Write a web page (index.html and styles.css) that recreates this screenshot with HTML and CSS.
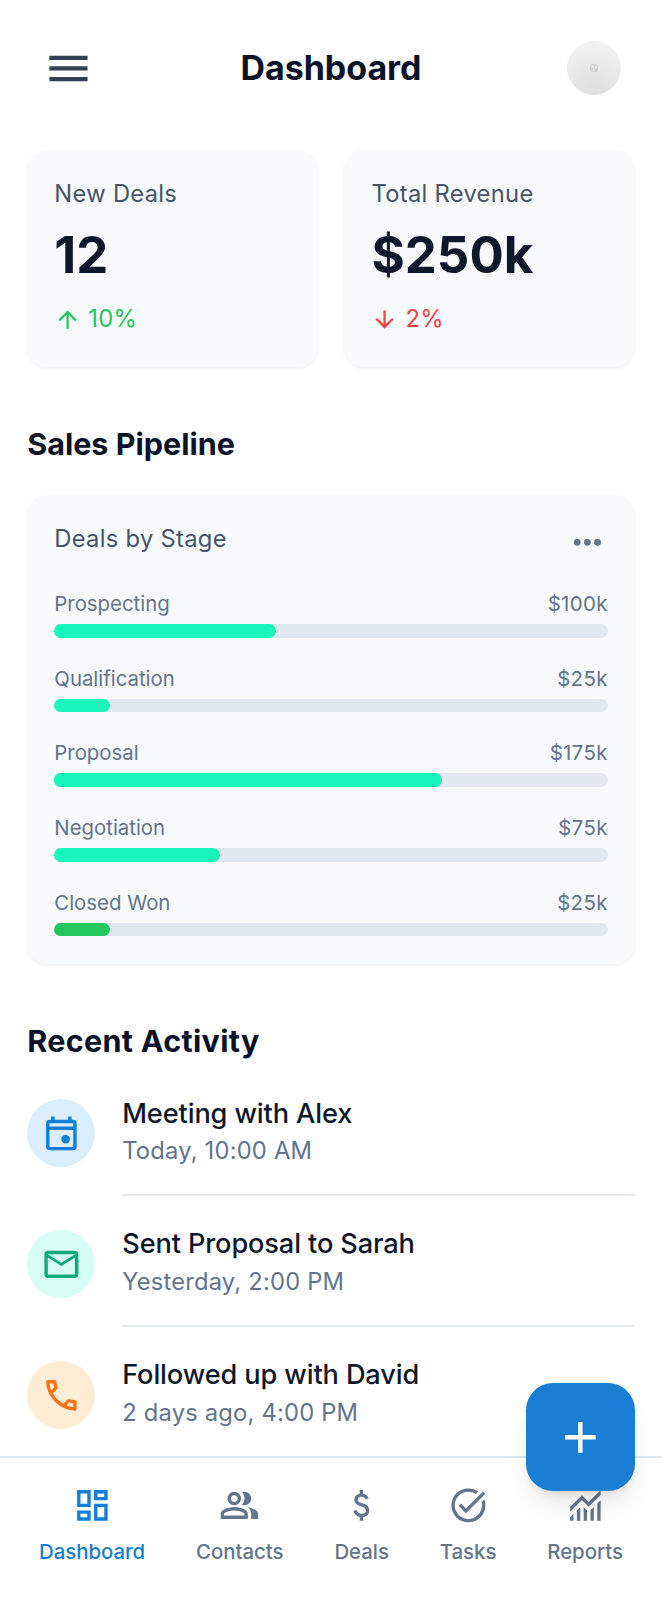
FILE: index.html
```html
<!DOCTYPE html>
<html lang="en">
<head>
<meta charset="utf-8">
<meta name="viewport" content="width=device-width, initial-scale=1">
<title>Dashboard</title>
<link rel="stylesheet" href="styles.css">
</head>
<body>
<div class="app">
  <header class="topbar">
    <button class="topbar-slot menu-button" aria-label="Menu">
      <svg class="icon icon-menu" viewBox="0 -960 960 960"><path d="M120-240v-80h720v80H120Zm0-200v-80h720v80H120Zm0-200v-80h720v80H120Z"/></svg>
    </button>
    <h1 class="topbar-title">Dashboard</h1>
    <div class="topbar-slot">
      <div class="avatar"><svg class="avatar-mark" viewBox="0 0 8 8"><rect x=".75" y=".75" width="6.5" height="6.5" rx="1"/><path d="M1 4.8h3.4M4.6 1v3M5 5h1.4v1.4H5z"/></svg></div>
    </div>
  </header>

  <main class="content">
    <section class="stats">
      <article class="card stat">
        <p class="label">New Deals</p>
        <p class="stat-value">12</p>
        <p class="trend trend-up">
          <svg class="icon icon-small" viewBox="0 -960 960 960"><path d="M440-160v-487L216-423l-56-57 320-320 320 320-56 57-224-224v487h-80Z"/></svg>
          <span>10%</span>
        </p>
      </article>
      <article class="card stat">
        <p class="label">Total Revenue</p>
        <p class="stat-value">$250k</p>
        <p class="trend trend-down">
          <svg class="icon icon-small" viewBox="0 -960 960 960"><path d="M440-800v487L216-537l-56 57 320 320 320-320-56-57-224 224v-487h-80Z"/></svg>
          <span>2%</span>
        </p>
      </article>
    </section>

    <section class="section">
      <h2 class="section-title">Sales Pipeline</h2>
      <div class="card pipeline">
        <div class="pipeline-head">
          <p class="label">Deals by Stage</p>
          <svg class="icon icon-more" viewBox="0 -960 960 960"><circle cx="240" cy="-480" r="80"/><circle cx="480" cy="-480" r="80"/><circle cx="720" cy="-480" r="80"/></svg>
        </div>
        <div class="stage">
          <div class="stage-row"><span>Prospecting</span><span class="amount">$100k</span></div>
          <div class="track"><div class="fill" style="width:40%"></div></div>
        </div>
        <div class="stage">
          <div class="stage-row"><span>Qualification</span><span class="amount">$25k</span></div>
          <div class="track"><div class="fill" style="width:10%"></div></div>
        </div>
        <div class="stage">
          <div class="stage-row"><span>Proposal</span><span class="amount">$175k</span></div>
          <div class="track"><div class="fill" style="width:70%"></div></div>
        </div>
        <div class="stage">
          <div class="stage-row"><span>Negotiation</span><span class="amount">$75k</span></div>
          <div class="track"><div class="fill" style="width:30%"></div></div>
        </div>
        <div class="stage">
          <div class="stage-row"><span>Closed Won</span><span class="amount">$25k</span></div>
          <div class="track"><div class="fill fill-won" style="width:10%"></div></div>
        </div>
      </div>
    </section>

    <section class="section">
      <h2 class="section-title section-title-wide">Recent Activity</h2>
      <ul class="activity">
        <li class="activity-item">
          <div class="badge badge-blue"><svg class="icon" viewBox="0 -960 960 960"><path d="M580-240q-42 0-71-29t-29-71q0-42 29-71t71-29q42 0 71 29t29 71q0 42-29 71t-71 29ZM200-80q-33 0-56.5-23.5T120-160v-560q0-33 23.5-56.5T200-800h40v-80h80v80h320v-80h80v80h40q33 0 56.5 23.5T840-720v560q0 33-23.5 56.5T760-80H200Zm0-80h560v-400H200v400Zm0-480h560v-80H200v80Z"/></svg></div>
          <div class="activity-body">
            <p class="activity-title">Meeting with Alex</p>
            <p class="activity-time">Today, 10:00 AM</p>
          </div>
        </li>
        <li class="activity-item">
          <div class="badge badge-green"><svg class="icon" viewBox="0 -960 960 960"><path d="M160-160q-33 0-56.5-23.5T80-240v-480q0-33 23.5-56.5T160-800h640q33 0 56.5 23.5T880-720v480q0 33-23.5 56.5T800-160H160Zm320-280L160-640v400h640v-400L480-440Zm0-80 320-200H160l320 200Z"/></svg></div>
          <div class="activity-body">
            <p class="activity-title">Sent Proposal to Sarah</p>
            <p class="activity-time">Yesterday, 2:00 PM</p>
          </div>
        </li>
        <li class="activity-item">
          <div class="badge badge-orange"><svg class="icon" viewBox="0 -960 960 960"><path d="M798-120q-125 0-247-54.5T329-329Q229-429 174.5-551T120-798q0-18 12-30t30-12h162q14 0 25 9.5t13 22.5l26 140q2 16-1 27t-11 19l-97 98q20 37 47.5 71.5T387-386q31 31 65 57.5t72 48.5l94-94q9-9 23.5-13.5T670-390l138 28q14 4 23 14.5t9 23.5v162q0 18-12 30t-30 12ZM241-600l66-66-17-94h-89q5 41 14 81t26 79Zm358 358q39 17 79.5 27t81.5 13v-88l-94-19-67 67Z"/></svg></div>
          <div class="activity-body">
            <p class="activity-title">Followed up with David</p>
            <p class="activity-time">2 days ago, 4:00 PM</p>
          </div>
        </li>
      </ul>
    </section>
  </main>

  <nav class="tabbar">
    <a class="tab tab-active">
      <svg class="icon" viewBox="0 -960 960 960"><path d="M520-600v-240h320v240H520ZM120-440v-400h320v400H120Zm400 320v-400h320v400H520Zm-400 0v-240h320v240H120Zm80-400h160v-240H200v240Zm400 320h160v-240H600v240Zm0-480h160v-80H600v80ZM200-200h160v-80H200v80Z"/></svg>
      <span>Dashboard</span>
    </a>
    <a class="tab">
      <svg class="icon" viewBox="0 -960 960 960"><path d="M40-160v-112q0-34 17.5-62.5T104-378q62-31 126-46.5T360-440q66 0 130 15.5T616-378q29 15 46.5 43.5T680-272v112H40Zm720 0v-120q0-44-24.5-84.5T666-434q51 6 96 20.5t84 35.5q36 20 55 44.5t19 53.5v120H760ZM360-480q-66 0-113-47t-47-113q0-66 47-113t113-47q66 0 113 47t47 113q0 66-47 113t-113 47Zm400-160q0 66-47 113t-113 47q-11 0-28-2.5t-28-5.5q27-32 41.5-71t14.5-81q0-42-14.5-81T544-792q14-5 28-6.5t28-1.5q66 0 113 47t47 113ZM120-240h480v-32q0-11-5.5-20T580-306q-54-27-109-40.5T360-360q-56 0-111 13.5T140-306q-9 5-14.5 14t-5.5 20v32Zm240-320q33 0 56.5-23.5T440-640q0-33-23.5-56.5T360-720q-33 0-56.5 23.5T280-640q0 33 23.5 56.5T360-560Z"/></svg>
      <span>Contacts</span>
    </a>
    <a class="tab">
      <svg class="icon" viewBox="0 -960 960 960"><path d="M441-120v-86q-53-12-91.5-46T293-348l74-30q15 48 44.5 73t77.5 25q41 0 69.5-18.5T587-356q0-35-22-55.5T463-458q-86-27-118-64.5T313-614q0-65 42-101t86-41v-84h80v84q50 8 82.5 36.5T651-650l-74 32q-12-32-34-48t-60-16q-44 0-67 19.5T393-614q0 33 30 52t104 40q69 20 104.5 63.5T667-358q0 71-42 108t-104 46v84h-80Z"/></svg>
      <span>Deals</span>
    </a>
    <a class="tab">
      <svg class="icon" viewBox="0 -960 960 960"><path d="M480-80q-83 0-156-31.5T197-197q-54-54-85.5-127T80-480q0-83 31.5-156T197-763q54-54 127-85.5T480-880q65 0 123 19t107 53l-58 59q-38-24-81-37.5T480-800q-133 0-226.5 93.5T160-480q0 133 93.5 226.5T480-160q133 0 226.5-93.5T800-480q0-18-2-36t-6-35l65-65q11 32 17 66t6 70q0 83-31.5 156T763-197q-54 54-127 85.5T480-80Zm-56-216L254-466l56-56 114 114 400-401 56 56-456 457Z"/></svg>
      <span>Tasks</span>
    </a>
    <a class="tab">
      <svg class="icon" viewBox="0 -960 960 960"><path d="M120-120v-80l80-80v160h-80Zm160 0v-240l80-80v320h-80Zm160 0v-320l80 81v239h-80Zm160 0v-239l80-80v319h-80Zm160 0v-400l80-80v480h-80ZM120-327v-113l280-280 160 160 280-280v113L560-447 400-607 120-327Z"/></svg>
      <span>Reports</span>
    </a>
  </nav>

  <button class="fab" aria-label="Add">
    <svg class="icon icon-add" viewBox="0 -960 960 960"><path d="M440-440H200v-80h240v-240h80v240h240v80H520v240h-80v-240Z"/></svg>
  </button>
</div>
</body>
</html>
```
FILE: styles.css
```css
/* The layout is 39rem wide and scales with the viewport. */
html { font-size: calc(100vw / 39); }

*, *::before, *::after { box-sizing: border-box; }

body {
  margin: 0;
  background: #fff;
  color: #0f172a;
  font-family: Inter, "Liberation Sans", sans-serif;
  overflow: hidden;
}

h1, h2, p, ul { margin: 0; padding: 0; }
button { border: 0; padding: 0; background: none; font: inherit; }

.app {
  position: relative;
  display: flex;
  flex-direction: column;
  height: 100vh;
}

.icon { display: block; flex: none; width: 2.4rem; height: 2.4rem; fill: currentColor; }
.icon-menu { width: 3rem; height: 3rem; }
.icon-small { width: 1.6rem; height: 1.6rem; }
.icon-add { width: 3.1rem; height: 3.1rem; }
.icon-more { color: #64748b; }

.topbar {
  display: flex;
  align-items: center;
  justify-content: space-between;
  flex: none;
  height: 8rem;
  padding: 0 1.6rem;
}
.topbar-slot { display: flex; align-items: center; justify-content: center; width: 4.8rem; height: 4.8rem; }
.menu-button { padding: .03rem 0 0 .03rem; color: #334155; }
.topbar-title { font-size: 2rem; line-height: 2.8rem; font-weight: 700; color: #0b1228; }
.avatar {
  display: flex;
  align-items: center;
  justify-content: center;
  width: 3.2rem;
  height: 3.2rem;
  border-radius: 50%;
  background: radial-gradient(circle at 50% 90%, #dfdfdf, #e8e8e8 45%, #f3f3f3 85%);
}
.avatar-mark { width: 8px; height: 8px; fill: none; stroke: #cacaca; stroke-width: 1; }

.content { flex: 1; min-height: 0; padding: .81rem 1.6rem 0; }

.card {
  padding: 1.6rem;
  border-radius: 1.2rem;
  background: #f8fafc;
  box-shadow: 0 .1rem .2rem rgba(0, 0, 0, .05);
}
.label { font-size: 1.4rem; line-height: 2rem; letter-spacing: .012em; color: #475569; }

.stats { display: grid; grid-template-columns: 1fr 1fr; gap: 1.57rem; }
.stat { display: flex; flex-direction: column; gap: .8rem; }
.stat-value { font-size: 3rem; line-height: 3.6rem; font-weight: 700; }
.trend { display: flex; align-items: center; gap: .4rem; font-size: 1.4rem; line-height: 2.4rem; letter-spacing: .012em; }
.trend-up { color: #22c55e; }
.trend-down { color: #ef4444; }

.section { margin-top: 3.13rem; }
.section-title { margin-bottom: 1.63rem; font-size: 1.8rem; line-height: 2.8rem; font-weight: 700; color: #0b1228; }
.section-title-wide { margin-bottom: 1.67rem; letter-spacing: .01em; }

.pipeline { display: flex; flex-direction: column; gap: 1.6rem; }
.pipeline-head { display: flex; justify-content: space-between; align-items: flex-start; }
.stage { display: flex; flex-direction: column; gap: .4rem; }
.stage-row { display: flex; justify-content: space-between; font-size: 1.2rem; line-height: 1.6rem; color: #64748b; }
.amount { letter-spacing: .018em; }
.track { height: .8rem; border-radius: .4rem; background: #e2e8f0; }
.fill { height: 100%; border-radius: .4rem; background: #19f6b9; }
.fill-won { background: #22c55e; }

.activity { display: flex; flex-direction: column; gap: 1.6rem; list-style: none; }
.activity-item { display: flex; align-items: flex-start; gap: 1.6rem; }
.badge {
  display: flex;
  align-items: center;
  justify-content: center;
  flex: none;
  width: 4rem;
  height: 4rem;
  margin-top: .4rem;
  border-radius: 50%;
}
.badge-blue { background: #dbeefd; color: #137fd8; }
.badge-green { background: #d6fef4; color: #0fa97a; }
.badge-orange { background: #ffedd5; color: #f97316; }
.activity-body { flex: 1; padding: .06rem 0 1.53rem; border-bottom: 2px solid #e5eaf2; }
.activity-item:last-child .activity-body { border-bottom: 0; }
.activity-title { font-size: 1.6rem; line-height: 2.4rem; font-weight: 500; letter-spacing: -.004em; }
.activity-time { font-size: 1.4rem; line-height: 2rem; letter-spacing: .008em; color: #64748b; }

.tabbar {
  display: flex;
  flex: none;
  justify-content: space-around;
  height: 8.46rem;
  padding: 1.54rem .8rem 0;
  border-top: 2px solid #e2e8f0;
  background: #fff;
}
.tab { display: flex; flex-direction: column; align-items: center; gap: .76rem; color: #64748b; font-size: 1.2rem; line-height: 1.6rem; font-weight: 500; }
.tab-active { color: #137fd8; }

.fab {
  position: absolute;
  right: 1.6rem;
  bottom: 6.4rem;
  display: flex;
  align-items: center;
  justify-content: center;
  width: 6.4rem;
  height: 6.4rem;
  border-radius: 1.6rem;
  background: #1a7fd4;
  color: #fff;
  box-shadow: 0 1rem 1.5rem -.3rem rgba(0, 0, 0, .1), 0 .4rem .6rem -.4rem rgba(0, 0, 0, .1);
}
```
